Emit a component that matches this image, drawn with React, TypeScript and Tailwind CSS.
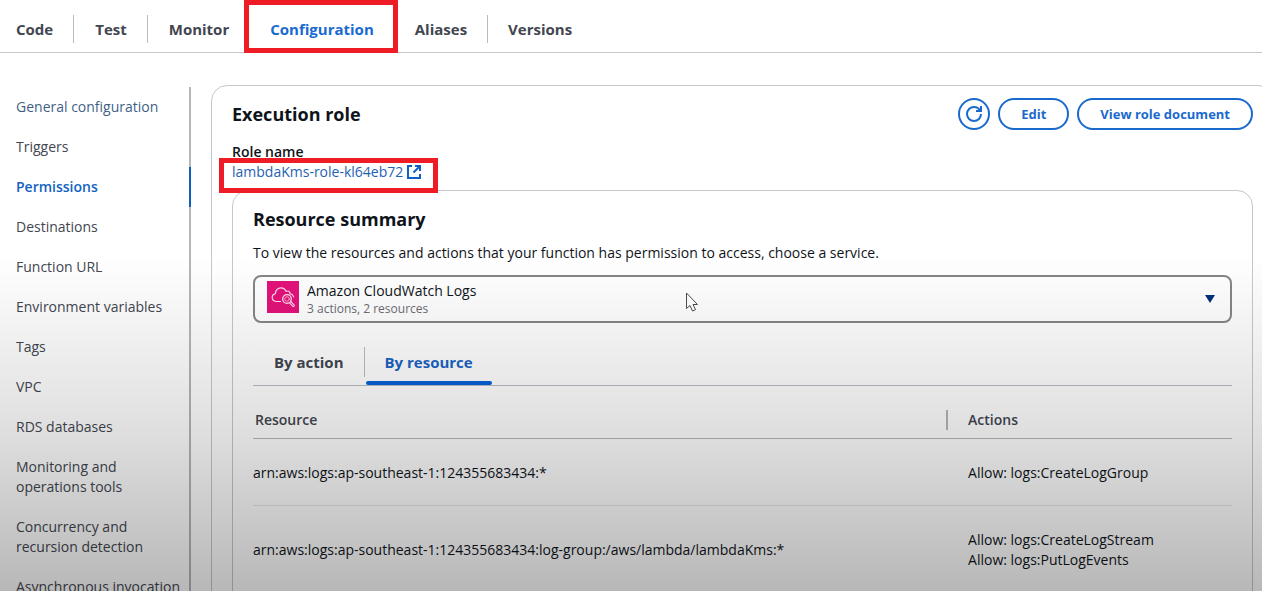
import type { ReactNode } from "react";
import clsx from "clsx";

const functionTabs = ["Code", "Test", "Monitor", "Configuration", "Aliases", "Versions"];

const sections = [
  "General configuration",
  "Triggers",
  "Permissions",
  "Destinations",
  "Function URL",
  "Environment variables",
  "Tags",
  "VPC",
  "RDS databases",
  "Monitoring and operations tools",
  "Concurrency and recursion detection",
  "Asynchronous invocation",
];

const rows = [
  {
    resource: "arn:aws:logs:ap-southeast-1:124355683434:*",
    actions: ["Allow: logs:CreateLogGroup"],
  },
  {
    resource: "arn:aws:logs:ap-southeast-1:124355683434:log-group:/aws/lambda/lambdaKms:*",
    actions: ["Allow: logs:CreateLogStream", "Allow: logs:PutLogEvents"],
  },
];

function Highlight({ className }: { className: string }) {
  return (
    <span
      aria-hidden="true"
      className={clsx("pointer-events-none absolute z-30 border-[5px] border-[#ee1c24]", className)}
    />
  );
}

function RefreshIcon() {
  return (
    <svg viewBox="0 0 16 16" className="size-4" fill="none" stroke="currentColor" strokeWidth="2" aria-hidden="true">
      <path d="M15 8c0 3.87-3.13 7-7 7s-7-3.13-7-7 3.13-7 7-7c2.79 0 5.2 1.63 6.33 4" />
      <path d="M10 5h5V0" />
    </svg>
  );
}

function ExternalIcon() {
  return (
    <svg viewBox="0 0 16 16" className="size-4" fill="none" stroke="#0f60c4" strokeWidth="2" aria-hidden="true">
      <path d="M6 2H2v12h12v-4" />
      <path d="M7.500 8.500L14 2" />
      <path d="M9 2h5v5" />
    </svg>
  );
}

function CloudWatchIcon() {
  return (
    <svg viewBox="0 0 32 32" className="size-8" fill="none" stroke="#ffd9ec" strokeLinecap="round" strokeLinejoin="round" aria-hidden="true">
      <rect width="32" height="32" fill="#e3127a" stroke="none" />
      <path
        strokeWidth="1.2"
        d="M13.5 20.5H9.2C6.800 20.300 5.200 18.700 5.200 16.600c0-2.100 1.300-3.500 3.200-4 0-3.300 2.500-5.700 5.500-5.700 2.400 0 4.300 1.400 5.100 3.500 1.800-1 3.900 0 4 2.200 1.800.3 3.200 1.500 3.700 3.200"
      />
      <circle cx="20" cy="18" r="4.300" strokeWidth="1.300" />
      <circle cx="20" cy="18" r="2.300" strokeWidth="0.700" />
      <path strokeWidth="1.100" d="M22.300 21.700l3.300 3.500c.9.900 2.300-.4 1.400-1.400l-3.300-3.300" />
    </svg>
  );
}

function PillButton({ children }: { children: ReactNode }) {
  return (
    <button
      type="button"
      className="h-8 rounded-full border-2 border-[#1a6ace] px-[21px] text-[13px] leading-5 font-bold text-[#1a6ace]"
    >
      {children}
    </button>
  );
}

export default function App() {
  return (
    <div className="relative h-screen overflow-hidden bg-white font-['Open_Sans','Noto_Sans',sans-serif] text-sm leading-5 text-[#0f141a]">
      <nav aria-label="Function" className="border-b border-[#c6c6cd]">
        <ul className="flex h-[52px] items-center pt-1.5">
          {functionTabs.map((tab, i) => {
            const active = tab === "Configuration";
            const divided = tab !== "Monitor" && !active && i < functionTabs.length - 1;
            return (
              <li
                key={tab}
                className={clsx(
                  "relative flex h-7 items-center border-r text-[15px] font-bold",
                  i === 0 ? "pr-5 pl-4" : i === 1 ? "pr-5 pl-[21px]" : i === 2 ? "pr-5 pl-[21px]" : "px-5",
                  divided ? "border-[#b9bcc3]" : "border-transparent",
                  active ? "text-[#1a6ad0]" : "text-[#424650]",
                )}
              >
                <a href="#" aria-current={active ? "page" : undefined}>
                  {tab}
                </a>
                {active && <Highlight className="-top-[15px] -right-1 -bottom-[10px] -left-1.5" />}
              </li>
            );
          })}
        </ul>
      </nav>

      <div className="flex items-start pt-8">
        <nav aria-label="Configuration" className="mt-0.5 w-[191px] shrink-0">
          <ul>
            {sections.map((name, i) => {
              const active = name === "Permissions";
              return (
                <li
                  key={name}
                  className={clsx(
                    "border-r-2 py-2.5 pr-2 pl-4",
                    active ? "border-[#0f5fc0] font-semibold text-[#1163c0]" : "border-[#b4b6ba]",
                    !active && (i === 0 ? "text-[#3f5f86]" : "text-[#424650]"),
                  )}
                >
                  <a href="#" className={clsx("block", name.length > 25 && "max-w-32")}>
                    {name}
                  </a>
                </li>
              );
            })}
          </ul>
        </nav>

        <main className="-mr-3 ml-5 min-w-0 grow rounded-2xl border border-[#c6c6cd] px-5 pt-3 pb-5">
          <header className="flex items-center justify-between">
            <h1 className="text-lg leading-6 font-bold">Execution role</h1>
            <div className="flex gap-2">
              <button
                type="button"
                aria-label="Refresh"
                className="flex size-8 items-center justify-center rounded-full border-2 border-[#1a6ace] text-[#1a6ace]"
              >
                <RefreshIcon />
              </button>
              <PillButton>Edit</PillButton>
              <PillButton>View role document</PillButton>
            </div>
          </header>

          <dl className="mt-3">
            <dt className="font-semibold">Role name</dt>
            <dd className="relative w-fit">
              <a href="#" className="flex items-center gap-[3px] text-[#1f62b0]">
                lambdaKms-role-kl64eb72
                <ExternalIcon />
              </a>
              <Highlight className="-top-1 -right-4 -bottom-[11px] -left-[13px]" />
            </dd>
          </dl>

          <section className="mt-2 rounded-2xl border border-[#c6c6cd] px-5 pt-4 pb-5">
            <h2 className="text-lg leading-6 font-bold">Resource summary</h2>
            <label htmlFor="service" className="mt-3 block">
              To view the resources and actions that your function has permission to access, choose a service.
            </label>

            <div className="mt-3 grid h-12">
              <select
                id="service"
                className="col-start-1 row-start-1 w-full appearance-none rounded-lg border-2 border-[#868686] pb-4 pl-[52px] text-sm leading-5"
              >
                <option>Amazon CloudWatch Logs</option>
              </select>
              <div className="pointer-events-none col-start-1 row-start-1 flex items-center gap-2 pr-4 pl-3.5">
                <div className="-mt-1">
                  <CloudWatchIcon />
                </div>
                <p className="mt-5 grow text-xs leading-4 text-[#6b6d72]">3 actions, 2 resources</p>
                <svg viewBox="0 0 12 10" className="h-2.5 w-3" aria-hidden="true">
                  <path d="M1 1h10L6 9z" fill="#03307c" />
                </svg>
              </div>
            </div>

            <div role="tablist" className="mt-4 flex h-[47px] border-b border-[#b9bcc3] text-[15px] font-bold">
              <div className="my-2 flex border-r border-[#b9bcc3]">
                <button type="button" role="tab" aria-selected="false" className="pr-5 pl-[21px] text-[#424650]">
                  By action
                </button>
              </div>
              <button
                type="button"
                role="tab"
                aria-selected="true"
                className="relative ml-px px-[19px] text-[#1a63c4] after:absolute after:inset-x-0 after:bottom-0 after:h-1 after:rounded-sm after:bg-[#0560d8]"
              >
                By resource
              </button>
            </div>

            <table className="w-full table-fixed border-separate border-spacing-0 text-left">
              <thead className="text-[#424650]">
                <tr>
                  <th scope="col" className="w-[71%] border-b border-[#b4b6ba] pt-6 pb-2 pl-0.5 font-semibold">
                    <div className="border-r-2 border-[#b4b6ba]">Resource</div>
                  </th>
                  <th scope="col" className="border-b border-[#b4b6ba] pt-6 pb-2 pl-5 font-semibold">
                    Actions
                  </th>
                </tr>
              </thead>
              <tbody>
                {rows.map((row) => (
                  <tr key={row.resource}>
                    <td className="border-b border-[#e4e5e8] pt-6 pb-[22px]">{row.resource}</td>
                    <td className="border-b border-[#e4e5e8] pt-6 pb-[22px] pl-5">
                      {row.actions.map((action) => (
                        <p key={action}>{action}</p>
                      ))}
                    </td>
                  </tr>
                ))}
              </tbody>
            </table>
          </section>
        </main>
      </div>

      <div
        aria-hidden="true"
        className="pointer-events-none absolute inset-x-0 bottom-0 z-20 h-[335px] bg-linear-to-b from-black/0 via-black/12 to-black/28"
      />

      <svg
        viewBox="0 0 14 20"
        className="pointer-events-none absolute top-[292px] left-[685px] z-30 h-5 w-3.5"
        fill="#f8f8f8"
        stroke="#4a4a4a"
        aria-hidden="true"
      >
        <path d="M1.500 1v15.500l3.500-3 2.500 5.500 3-1.300-2.500-5.200h4.500z" />
      </svg>
    </div>
  );
}
